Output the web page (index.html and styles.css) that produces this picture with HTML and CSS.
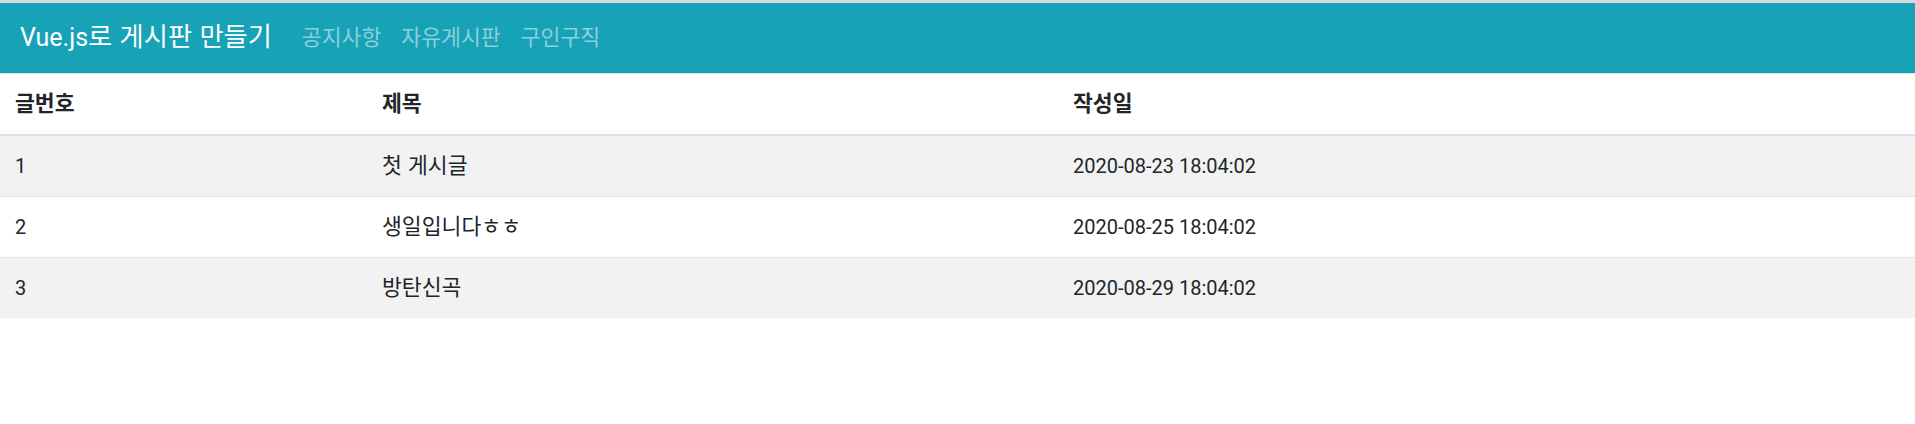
FILE: index.html
```html
<!DOCTYPE html>
<html lang="ko">
<head>
<meta charset="utf-8">
<title>Vue.js로 게시판 만들기</title>
<link rel="stylesheet" href="styles.css">
</head>
<body>
<div class="topstrip"></div>
<nav class="navbar">
  <a class="brand" href="#">Vue.js<span class="ko ko-brand">로 게시판 만들기</span></a>
  <ul class="nav">
    <li><a class="nav-link" href="#"><span class="ko">공지사항</span></a></li>
    <li><a class="nav-link" href="#"><span class="ko">자유게시판</span></a></li>
    <li><a class="nav-link" href="#"><span class="ko">구인구직</span></a></li>
  </ul>
</nav>
<table class="board">
  <colgroup>
    <col class="c-no">
    <col class="c-title">
    <col class="c-date">
  </colgroup>
  <thead>
    <tr><th><span class="ko">글번호</span></th><th><span class="ko">제목</span></th><th><span class="ko">작성일</span></th></tr>
  </thead>
  <tbody>
    <tr><td>1</td><td><span class="ko">첫 게시글</span></td><td>2020-08-23 18:04:02</td></tr>
    <tr><td>2</td><td><span class="ko">생일입니다ㅎㅎ</span></td><td>2020-08-25 18:04:02</td></tr>
    <tr><td>3</td><td><span class="ko">방탄신곡</span></td><td>2020-08-29 18:04:02</td></tr>
  </tbody>
</table>
</body>
</html>
```

FILE: styles.css
```css
* { box-sizing: border-box; }
html, body { margin: 0; padding: 0; background: #fff; }
body {
  font-family: Roboto, "Liberation Sans", "Noto Sans CJK KR", sans-serif;
  font-size: 20px;
  line-height: 1.5;
  color: #212529;
}
.ko {
  font-family: "Noto Sans CJK KR", sans-serif;
  font-size: 1.08em;
  line-height: 1;
}
.ko-brand { font-size: 1.05em; }
.topstrip { height: 3px; background: #dadada; }
.navbar {
  display: flex;
  align-items: center;
  height: 70px;
  padding: 0 20px;
  background: #17a2b8;
}
.brand {
  font-size: 25px;
  color: #fff;
  text-decoration: none;
  margin-right: 20px;
  line-height: 1.5;
}
.nav { display: flex; list-style: none; margin: 0; padding: 0; }
.nav-link {
  display: block;
  padding: 10px;
  color: rgba(255,255,255,0.5);
  text-decoration: none;
}
.board {
  width: 100%;
  border-collapse: collapse;
  table-layout: fixed;
}
.c-no { width: 367px; }
.c-title { width: 691px; }
.board th, .board td {
  padding: 15px;
  text-align: left;
  vertical-align: top;
  border-top: 1px solid #dee2e6;
}
.board th { font-weight: bold; border-bottom: 2px solid #dee2e6; }
.board tbody tr:nth-child(odd) { background: #f2f2f2; }
```
